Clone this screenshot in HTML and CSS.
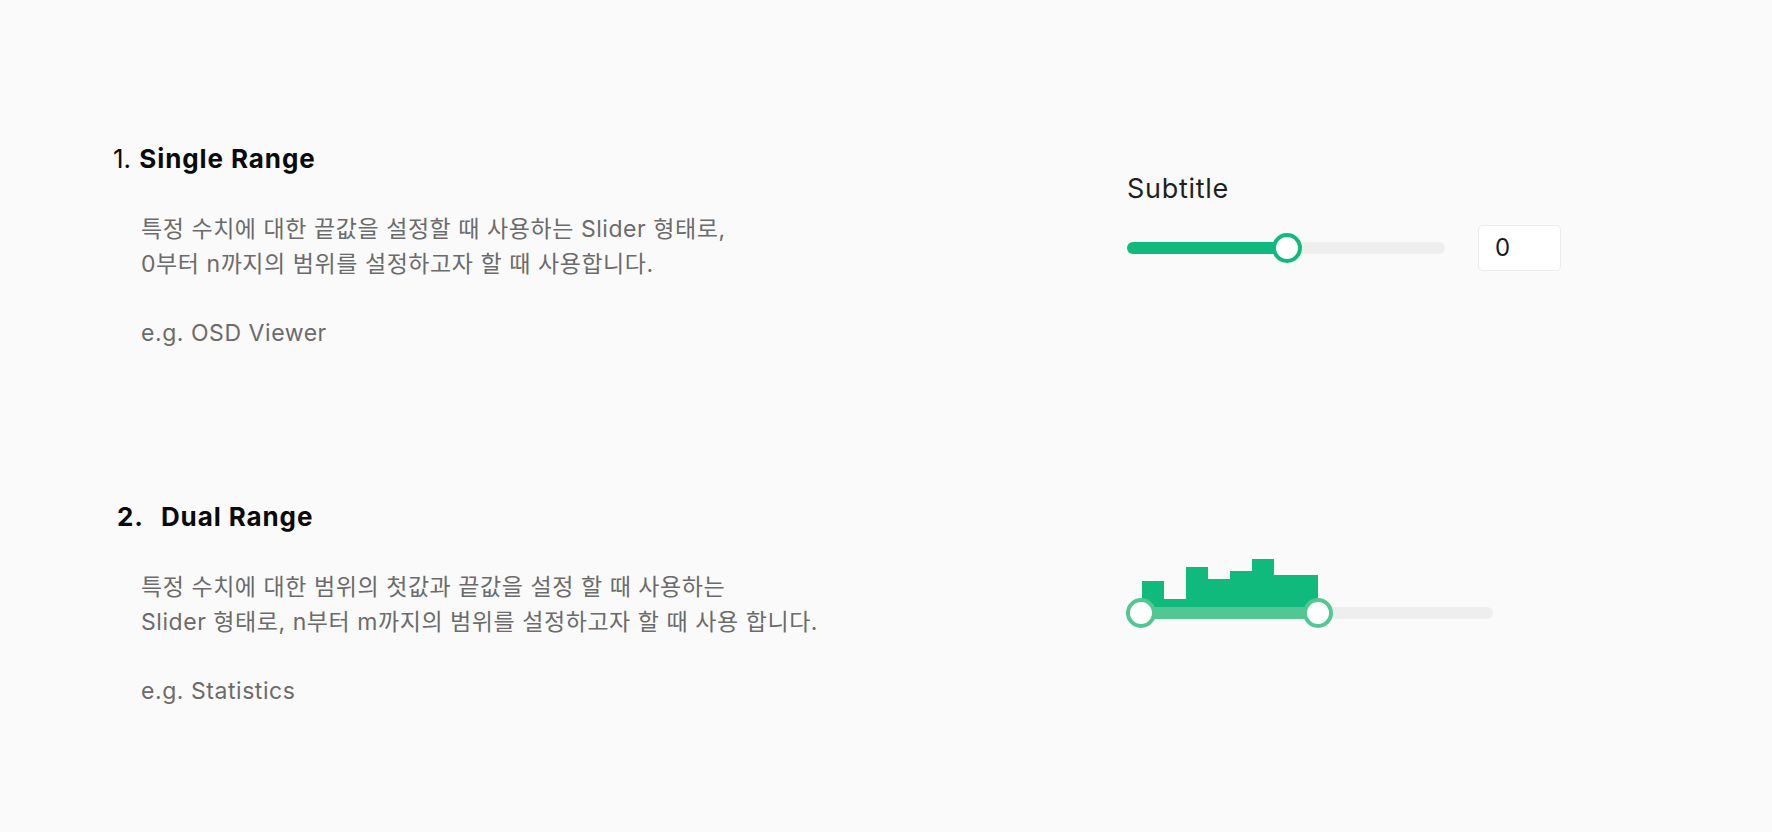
FILE: index.html
```html
<!DOCTYPE html>
<html lang="ko">
<head>
<meta charset="utf-8">
<title>Range Slider</title>
<link rel="stylesheet" href="styles.css">
</head>
<body>
<main class="page">
  <section class="section section-single">
    <div class="info">
      <h2 class="title title-single"><span class="num">1.</span> <b>Single Range</b></h2>
      <p class="desc">특정 수치에 대한 끝값을 설정할 때 사용하는 Slider 형태로,<br>0부터 n까지의 범위를 설정하고자 할 때 사용합니다.<br><br>e.g. OSD Viewer</p>
    </div>
    <div class="demo demo-single">
      <div class="subtitle">Subtitle</div>
      <div class="slider-row">
        <div class="track track-single">
          <div class="fill fill-single" style="width:160px"></div>
          <div class="thumb thumb-single" style="left:145px"></div>
        </div>
        <div class="value-box">0</div>
      </div>
    </div>
  </section>
  <section class="section section-dual">
    <div class="info">
      <h2 class="title title-dual"><b class="num-bold">2.</b><b>Dual Range</b></h2>
      <p class="desc">특정 수치에 대한 범위의 첫값과 끝값을 설정 할 때 사용하는<br>Slider 형태로, n부터 m까지의 범위를 설정하고자 할 때 사용 합니다.<br><br>e.g. Statistics</p>
    </div>
    <div class="demo demo-dual">
      <div class="dual">
        <div class="histogram">
          <div class="bar" style="height:26px"></div>
          <div class="bar" style="height:8px"></div>
          <div class="bar" style="height:40px"></div>
          <div class="bar" style="height:28px"></div>
          <div class="bar" style="height:36px"></div>
          <div class="bar" style="height:48px"></div>
          <div class="bar" style="height:32px"></div>
          <div class="bar" style="height:32px"></div>
        </div>
        <div class="track track-dual">
          <div class="fill fill-dual" style="left:14px;width:177px"></div>
          <div class="thumb thumb-dual" style="left:-1px"></div>
          <div class="thumb thumb-dual" style="left:176px"></div>
        </div>
      </div>
    </div>
  </section>
</main>
</body>
</html>
```

FILE: styles.css
```css
html, body {
  margin: 0;
  padding: 0;
  background: #fafafa;
}

body {
  font-family: Inter, "Noto Sans CJK KR", sans-serif;
  color: #111;
  overflow: hidden;
}

.page {
  padding: 143px 0 0 110px;
  display: flex;
  flex-direction: column;
}

.section {
  display: flex;
}

.section-single {
  height: 358px;
}

.info {
  width: 1017px;
  flex: none;
}

.title {
  margin: 0;
  font-size: 26px;
  line-height: 32px;
  font-weight: 400;
  color: #0a0a0a;
  letter-spacing: 0.9px;
}

.title b {
  font-weight: 700;
}

.title-single {
  padding-left: 3px;
}

.num {
  letter-spacing: 0;
}

.title-dual {
  padding-left: 7px;
}

.num-bold {
  margin-right: 17px;
}

.desc {
  margin: 37px 0 0 31px;
  font-size: 23px;
  line-height: 34.5px;
  letter-spacing: 0.55px;
  color: #6b6b6b;
}

.demo {
  flex: none;
}

.demo-single {
  padding-top: 31px;
}

.subtitle {
  font-size: 27px;
  line-height: 30px;
  letter-spacing: 0.7px;
  color: #1f1f1f;
}

.slider-row {
  margin-top: 21px;
  display: flex;
  align-items: center;
  gap: 33px;
  height: 46px;
}

.track {
  position: relative;
  height: 12px;
  border-radius: 6px;
  background: #eeeeee;
}

.track-single {
  width: 318px;
}

.fill {
  position: absolute;
  top: 0;
  height: 12px;
  border-radius: 6px;
}

.fill-single {
  left: 0;
  background: #10b97c;
}

.thumb {
  position: absolute;
  top: -9px;
  width: 30px;
  height: 30px;
  box-sizing: border-box;
  border-radius: 50%;
  background: #ffffff;
}

.thumb-single {
  border: 4px solid #10b97c;
}

.value-box {
  width: 83px;
  height: 46px;
  box-sizing: border-box;
  border: 1.5px solid #ebebeb;
  border-radius: 5px;
  background: #ffffff;
  padding-left: 16px;
  font-size: 24px;
  line-height: 43px;
  color: #1a1a1a;
}

.demo-dual {
  padding-top: 58px;
}

.dual {
  width: 366px;
}

.histogram {
  display: flex;
  align-items: flex-end;
  height: 48px;
  margin-left: 15px;
}

.bar {
  width: 22px;
  background: #10b97c;
}

.track-dual {
  width: 366px;
}

.fill-dual {
  background: #52c793;
  border-radius: 0;
}

.thumb-dual {
  border: 4.5px solid #52c793;
}
```
